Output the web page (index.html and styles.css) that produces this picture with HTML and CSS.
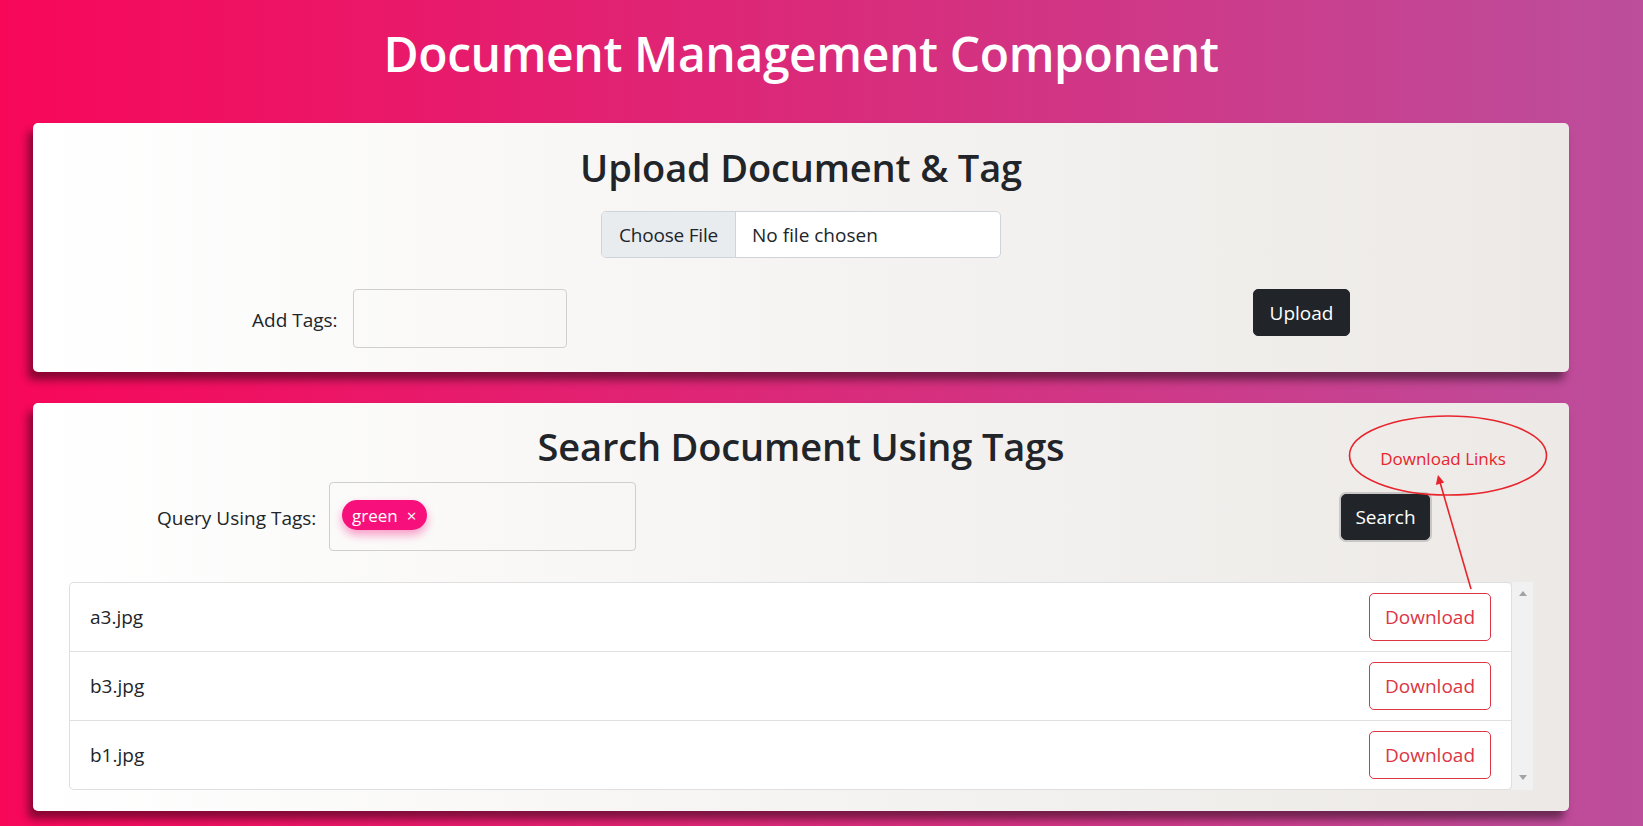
FILE: index.html
```html
<!DOCTYPE html>
<html lang="en">
<head>
<meta charset="utf-8">
<title>Document Management Component</title>
<link rel="stylesheet" href="styles.css">
</head>
<body>
<main class="page">
  <h1 class="title">Document Management Component</h1>

  <section class="card card-upload">
    <h2 class="card-title">Upload Document &amp; Tag</h2>
    <div class="file-input">
      <span class="file-btn">Choose File</span>
      <span class="file-name">No file chosen</span>
    </div>
    <div class="form-row upload-row">
      <label class="form-label label-add">Add Tags:</label>
      <div class="tags-input tags-add"></div>
      <button class="btn btn-dark btn-upload" type="button">Upload</button>
    </div>
  </section>

  <section class="card card-search">
    <h2 class="card-title">Search Document Using Tags</h2>
    <div class="form-row search-row">
      <label class="form-label label-query">Query Using Tags:</label>
      <div class="tags-input tags-query">
        <span class="tag-chip">green <span class="tag-x">×</span></span>
      </div>
      <button class="btn btn-dark btn-search" type="button">Search</button>
    </div>

    <div class="results">
      <ul class="list-group">
        <li class="list-item"><span class="file-label">a3.jpg</span><button class="btn btn-outline-danger" type="button">Download</button></li>
        <li class="list-item"><span class="file-label">b3.jpg</span><button class="btn btn-outline-danger" type="button">Download</button></li>
        <li class="list-item"><span class="file-label">b1.jpg</span><button class="btn btn-outline-danger" type="button">Download</button></li>
      </ul>
      <div class="scrollbar">
        <span class="arrow arrow-up"></span>
        <span class="arrow arrow-down"></span>
      </div>
    </div>

    <svg class="annotation" width="1536" height="408" viewBox="0 0 1536 408">
      <ellipse cx="1415" cy="52.5" rx="98.5" ry="39.5" fill="none" stroke="#e8242c" stroke-width="1.6"/>
      <text x="1410" y="62" text-anchor="middle" class="annotation-text">Download Links</text>
      <line x1="1438" y1="186" x2="1405.5" y2="74" stroke="#e8242c" stroke-width="1.6"/>
      <polygon points="1405,72 1402.8,82 1411.2,79.6" fill="#e8242c"/>
    </svg>
  </section>
</main>
</body>
</html>
```

FILE: styles.css
```css
* {
  box-sizing: border-box;
}

html, body {
  margin: 0;
  padding: 0;
}

body {
  min-height: 826px;
  background: linear-gradient(to right, #f80759, #bc4e9c);
  font-family: "Open Sans", "Noto Sans", "Liberation Sans", sans-serif;
  color: #212529;
  overflow: hidden;
}

.page {
  width: 1536px;
  margin-left: 33px;
  padding-top: 23px;
}

.title {
  margin: 0 0 39px;
  font-size: 48px;
  line-height: 61px;
  font-weight: 600;
  color: #fff;
  text-align: center;
  letter-spacing: -0.4px;
}

.card {
  position: relative;
  background: linear-gradient(to right, #ffffff, #ece9e6);
  border-radius: 5px;
  box-shadow: -5px 8px 8px rgba(0, 0, 0, 0.45);
}

.card-upload {
  height: 249px;
  padding: 20px 0 24px;
  margin-bottom: 31px;
}

.card-search {
  height: 408px;
  padding: 19px 0 21px;
}

.card-title {
  margin: 0;
  font-size: 38px;
  line-height: 48px;
  font-weight: 600;
  text-align: center;
  letter-spacing: -0.15px;
}

/* file input */
.file-input {
  display: flex;
  width: 400px;
  height: 47px;
  margin: 20px auto 0;
  border: 1px solid #ced4da;
  border-radius: 5px;
  background: #fff;
  overflow: hidden;
  font-size: 19px;
  align-items: stretch;
  white-space: nowrap;
}

.file-btn {
  display: flex;
  align-items: center;
  justify-content: center;
  flex: 0 0 134px;
  padding: 0 8px;
  background: #e9ecef;
  border-right: 1px solid #ced4da;
  letter-spacing: -0.2px;
}

.file-name {
  display: flex;
  align-items: center;
  padding-left: 16px;
}

/* rows */
.form-row {
  display: flex;
}

.form-label {
  font-size: 19px;
  line-height: 30px;
  white-space: nowrap;
  text-align: right;
}

.upload-row {
  margin-top: 31px;
  padding: 0 219px;
  align-items: flex-start;
}

.label-add {
  width: 85px;
  align-self: center;
  margin-top: 3px;
}

.tags-input {
  border: 1px solid #cfcfcf;
  border-radius: 4px;
  margin-left: 16px;
}

.tags-add {
  width: 214px;
  height: 59px;
}

.search-row {
  margin-top: 12px;
  padding: 0 139px 0 124px;
  align-items: center;
  height: 69px;
}

.label-query {
  width: 156px;
  margin-top: 2px;
}

.tags-query {
  width: 307px;
  height: 69px;
  padding: 17px 12px;
}

.tag-chip {
  display: inline-flex;
  align-items: center;
  height: 30px;
  padding: 0 11px 0 10px;
  border-radius: 15px;
  background: #f7107b;
  color: #fff;
  font-size: 17px;
  box-shadow: 0 5px 10px rgba(247, 16, 123, 0.4);
}

.tag-x {
  font-size: 17px;
  margin-left: 9px;
}

/* buttons */
.btn {
  font-family: inherit;
  font-size: 19px;
  line-height: 30px;
  border-radius: 5px;
  cursor: pointer;
  padding: 0 12px;
  white-space: nowrap;
}

.btn-dark {
  background: #212529;
  border: 1px solid #212529;
  color: #fff;
}

.btn-upload {
  margin-left: auto;
  width: 97px;
  height: 47px;
}

.btn-search {
  margin-left: auto;
  width: 89px;
  height: 46px;
  box-shadow: 0 0 0 2px rgba(170, 170, 170, 0.55);
}

.btn-outline-danger {
  background: #fff;
  border: 1px solid #dc3545;
  color: #dc3545;
  width: 122px;
  height: 48px;
}

/* results */
.results {
  display: flex;
  margin: 31px 36px 0;
  height: 208px;
}

.list-group {
  flex: 1;
  list-style: none;
  margin: 0;
  padding: 0;
  border: 1px solid rgba(0, 0, 0, 0.125);
  border-radius: 5px;
  background: #fff;
  overflow: hidden;
}

.list-item {
  display: flex;
  align-items: center;
  justify-content: space-between;
  padding: 10px 20px;
  height: 69px;
  font-size: 19px;
}

.list-item + .list-item {
  border-top: 1px solid rgba(0, 0, 0, 0.125);
}

.list-item:first-child {
  height: 68px;
}

.scrollbar {
  position: relative;
  width: 21px;
  background: #f1f1f1;
  display: flex;
  flex-direction: column;
  justify-content: space-between;
  align-items: center;
  padding: 9px 0 10px;
}

.arrow {
  width: 0;
  height: 0;
  border-left: 4.5px solid transparent;
  border-right: 4.5px solid transparent;
}

.arrow-up {
  border-bottom: 5px solid #a3a3a3;
}

.arrow-down {
  border-top: 5px solid #a3a3a3;
}

/* annotation overlay */
.annotation {
  position: absolute;
  left: 0;
  top: 0;
  pointer-events: none;
}

.annotation-text {
  font-family: "Open Sans", "Noto Sans", sans-serif;
  font-size: 17px;
  fill: #e8242c;
}
```
